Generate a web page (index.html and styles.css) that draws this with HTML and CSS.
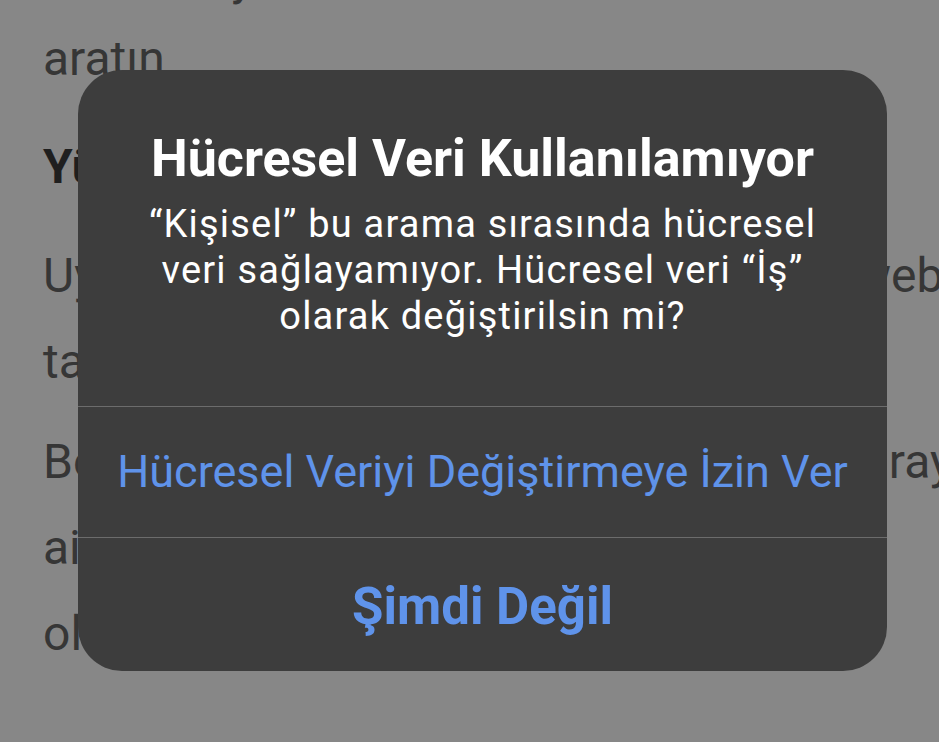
FILE: index.html
```html
<!DOCTYPE html>
<html lang="tr">
<head>
<meta charset="utf-8">
<title>Hücresel Veri Kullanılamıyor</title>
<link rel="stylesheet" href="styles.css">
</head>
<body>
<div class="screen">
  <div class="article">
    <p class="line first">Hatanızı yazın ve web'de</p>
    <p class="line">aratın</p>
    <p class="line heading">Yüklemeyi yeniden deneyin</p>
    <p class="line split gap"><span class="lead">Uygulamanın güncel olup olmadığını kontrol edin</span><span>web</span></p>
    <p class="line">tarayıcısında tekrar deneyin</p>
    <p class="line split alt gap"><span class="lead">Bozuk bir bağlantı varsa yeniden başlatın ve</span><span>tarayıcı</span></p>
    <p class="line">ailesi ile deneyin</p>
    <p class="line">olarak</p>
  </div>

  <div class="alert" role="alertdialog">
    <div class="alert-body">
      <h1 class="alert-title">Hücresel Veri Kullanılamıyor</h1>
      <p class="alert-message">“Kişisel” bu arama sırasında hücresel<br>veri sağlayamıyor. Hücresel veri “İş”<br>olarak değiştirilsin mi?</p>
    </div>
    <button class="alert-btn">Hücresel Veriyi Değiştirmeye İzin Ver</button>
    <button class="alert-btn bold">Şimdi Değil</button>
  </div>
</div>
</body>
</html>
```

FILE: styles.css
```css
html, body {
  margin: 0;
  padding: 0;
  background: #878787;
}

.screen {
  position: relative;
  width: 939px;
  height: 742px;
  overflow: hidden;
  font-family: Roboto, "Noto Sans", sans-serif;
}

.article {
  padding-left: 43px;
  margin-top: -65px;
}

.line {
  margin: 0;
  font-size: 48px;
  line-height: 86px;
  color: #363636;
  white-space: nowrap;
}

.line.first {
  margin-bottom: -5px;
}

.split {
  display: grid;
  grid-template-columns: 812px max-content;
}

.split.alt {
  grid-template-columns: 804px max-content;
}

.lead {
  overflow: hidden;
}

.heading {
  font-weight: 700;
  color: #1f1f1f;
  margin-top: 22px;
}

.gap {
  margin-top: 23px;
}

.split.alt.gap {
  margin-top: 14px;
}

.alert {
  position: absolute;
  left: 78px;
  top: 70px;
  width: 809px;
  height: 601px;
  border-radius: 44px;
  background: #3d3d3d;
  display: flex;
  flex-direction: column;
  overflow: hidden;
}

.alert-body {
  height: 336px;
  box-sizing: border-box;
  padding-top: 59px;
  text-align: center;
  color: #ffffff;
}

.alert-title {
  margin: 0;
  font-size: 52px;
  line-height: 60px;
  font-weight: 700;
}

.alert-message {
  margin: 12px 0 0;
  font-size: 38px;
  line-height: 46px;
  letter-spacing: 1.2px;
  font-weight: 400;
}

.alert-btn {
  flex: 1;
  margin: 0;
  padding: 0;
  border: 0;
  border-top: 1px solid #6c6c6c;
  background: transparent;
  color: #5f93ea;
  font-family: inherit;
  font-size: 45px;
  font-weight: 400;
  text-align: center;
}

.alert-btn.bold {
  font-weight: 700;
  font-size: 51px;
  padding-top: 4px;
}
```
